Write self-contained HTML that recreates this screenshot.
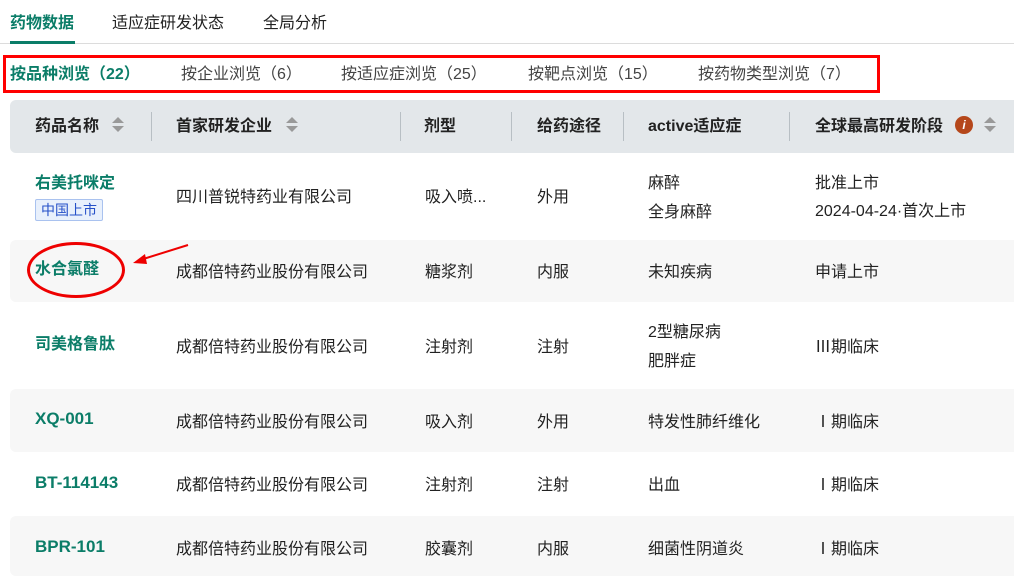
<!DOCTYPE html>
<html><head><meta charset="utf-8"><style>
*{margin:0;padding:0;box-sizing:border-box}
body{width:1014px;height:565px;overflow:hidden;background:#fff;font-family:"Liberation Sans","Noto Sans CJK SC",sans-serif;color:#222;position:relative;font-size:16px}
.a{position:absolute;white-space:nowrap;line-height:22px}
.g{color:#0b7d68;font-weight:bold}
.hd{position:absolute;left:10px;top:100px;width:1010px;height:53px;background:#e3e7ea;border-radius:6px}
.hd .a{top:16px;font-weight:bold;font-size:16px;color:#222}
.dv{position:absolute;top:12px;width:1px;height:29px;background:#b8bfc4}
.row{position:absolute;left:10px;width:1010px;background:#f7f7f7;border-radius:6px}
.sort{position:absolute;width:0;height:0;border-left:6px solid transparent;border-right:6px solid transparent}
</style></head><body>
<div class="a g" style="left:10px;top:13px;font-size:16px">药物数据</div>
<div class="a" style="left:112px;top:13px;font-size:16px">适应症研发状态</div>
<div class="a" style="left:263px;top:13px;font-size:16px">全局分析</div>
<div class="a" style="left:0;top:43px;width:1014px;height:1px;background:#dcdcdc"></div>
<div class="a" style="left:10px;top:41px;width:65px;height:3px;background:#0b7d68"></div>
<div class="a" style="left:3px;top:55px;width:877px;height:38px;border:3px solid #f00"></div>
<div class="a g" style="left:10px;top:64px;font-size:16px">按品种浏览（22）</div>
<div class="a" style="left:181px;top:64px;font-size:16px;color:#444">按企业浏览（6）</div>
<div class="a" style="left:341px;top:64px;font-size:16px;color:#444">按适应症浏览（25）</div>
<div class="a" style="left:528px;top:64px;font-size:16px;color:#444">按靶点浏览（15）</div>
<div class="a" style="left:698px;top:64px;font-size:16px;color:#444">按药物类型浏览（7）</div>
<div class="hd">
<div class="a" style="left:25px">药品名称</div>
<div class="sort" style="left:102px;top:17px;border-bottom:6px solid #999"></div><div class="sort" style="left:102px;top:26px;border-top:6px solid #999"></div>
<div class="dv" style="left:141px"></div>
<div class="a" style="left:166px">首家研发企业</div>
<div class="sort" style="left:276px;top:17px;border-bottom:6px solid #999"></div><div class="sort" style="left:276px;top:26px;border-top:6px solid #999"></div>
<div class="dv" style="left:390px"></div>
<div class="a" style="left:414px">剂型</div>
<div class="dv" style="left:501px"></div>
<div class="a" style="left:527px">给药途径</div>
<div class="dv" style="left:613px"></div>
<div class="a" style="left:638px">active适应症</div>
<div class="dv" style="left:779px"></div>
<div class="a" style="left:805px">全球最高研发阶段</div>
<div class="a" style="left:945px;top:16px;width:18px;height:18px;border-radius:50%;background:#b5471b;color:#fff;font-size:12px;text-align:center;line-height:18px;font-style:italic">i</div>
<div class="sort" style="left:974px;top:17px;border-bottom:6px solid #999"></div><div class="sort" style="left:974px;top:26px;border-top:6px solid #999"></div>
</div>
<div class="row" style="top:240px;height:62px"></div>
<div class="row" style="top:389px;height:63px"></div>
<div class="row" style="top:516px;height:60px"></div>
<!-- row1 -->
<div class="a g" style="left:35px;top:173px;font-size:16px">右美托咪定</div>
<div class="a" style="left:35px;top:199px;height:22px;padding:0 5px;background:#e8f0fc;border:1px solid #a9c2ef;border-radius:2px;color:#2550c8;font-size:14px;line-height:20px">中国上市</div>
<div class="a" style="left:176px;top:187px">四川普锐特药业有限公司</div>
<div class="a" style="left:425px;top:187px">吸入喷...</div>
<div class="a" style="left:537px;top:187px">外用</div>
<div class="a" style="left:648px;top:173px">麻醉</div>
<div class="a" style="left:648px;top:202px">全身麻醉</div>
<div class="a" style="left:815px;top:173px">批准上市</div>
<div class="a" style="left:815px;top:201px">2024-04-24·首次上市</div>
<!-- row2 -->
<div class="a g" style="left:35px;top:259px;font-size:16px">水合氯醛</div>
<div class="a" style="left:27px;top:242px;width:98px;height:56px;border:3px solid #e00;border-radius:50%"></div>
<svg class="a" style="left:130px;top:243px" width="60" height="24"><line x1="58" y1="2" x2="10" y2="17" stroke="#e00" stroke-width="2"/><polygon points="3,20 15,11 17,21" fill="#e00"/></svg>
<div class="a" style="left:176px;top:262px">成都倍特药业股份有限公司</div>
<div class="a" style="left:425px;top:262px">糖浆剂</div>
<div class="a" style="left:537px;top:262px">内服</div>
<div class="a" style="left:648px;top:262px">未知疾病</div>
<div class="a" style="left:815px;top:262px">申请上市</div>
<!-- row3 -->
<div class="a g" style="left:35px;top:334px;font-size:16px">司美格鲁肽</div>
<div class="a" style="left:176px;top:337px">成都倍特药业股份有限公司</div>
<div class="a" style="left:425px;top:337px">注射剂</div>
<div class="a" style="left:537px;top:337px">注射</div>
<div class="a" style="left:648px;top:322px">2型糖尿病</div>
<div class="a" style="left:648px;top:351px">肥胖症</div>
<div class="a" style="left:815px;top:337px">Ⅲ期临床</div>
<!-- row4 -->
<div class="a g" style="left:35px;top:408px;font-size:17px">XQ-001</div>
<div class="a" style="left:176px;top:412px">成都倍特药业股份有限公司</div>
<div class="a" style="left:425px;top:412px">吸入剂</div>
<div class="a" style="left:537px;top:412px">外用</div>
<div class="a" style="left:648px;top:412px">特发性肺纤维化</div>
<div class="a" style="left:815px;top:412px">Ⅰ期临床</div>
<!-- row5 -->
<div class="a g" style="left:35px;top:472px;font-size:17px">BT-114143</div>
<div class="a" style="left:176px;top:475px">成都倍特药业股份有限公司</div>
<div class="a" style="left:425px;top:475px">注射剂</div>
<div class="a" style="left:537px;top:475px">注射</div>
<div class="a" style="left:648px;top:475px">出血</div>
<div class="a" style="left:815px;top:475px">Ⅰ期临床</div>
<!-- row6 -->
<div class="a g" style="left:35px;top:536px;font-size:17px">BPR-101</div>
<div class="a" style="left:176px;top:539px">成都倍特药业股份有限公司</div>
<div class="a" style="left:425px;top:539px">胶囊剂</div>
<div class="a" style="left:537px;top:539px">内服</div>
<div class="a" style="left:648px;top:539px">细菌性阴道炎</div>
<div class="a" style="left:815px;top:539px">Ⅰ期临床</div>
</body></html>
